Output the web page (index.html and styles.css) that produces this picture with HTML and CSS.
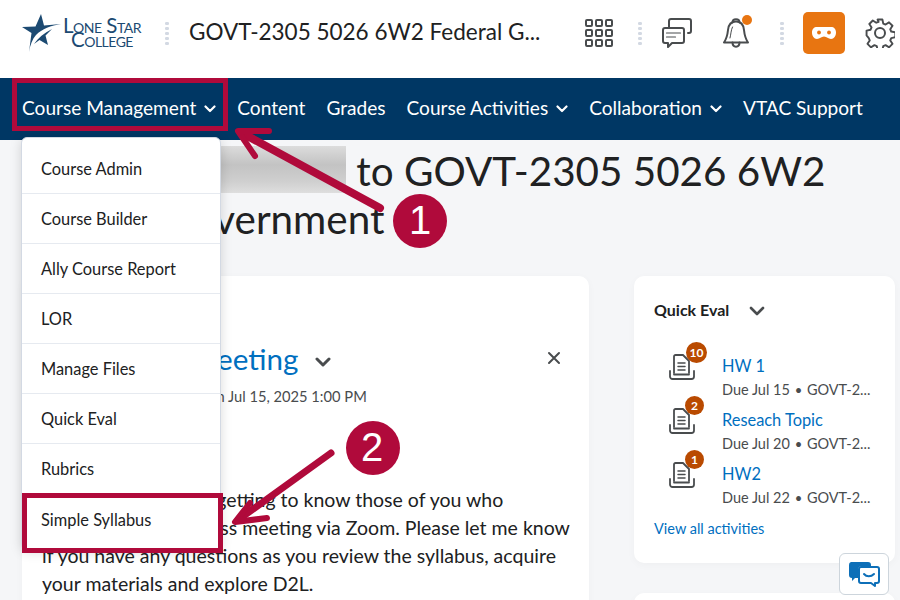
FILE: index.html
```html
<!DOCTYPE html>
<html lang="en">
<head>
<meta charset="utf-8">
<title>GOVT-2305</title>
<link rel="stylesheet" href="styles.css">
</head>
<body>
<div class="page">
  <header class="topbar">
    <div class="logo">
      <svg class="logo-star" width="41" height="40" viewBox="0 0 41 40">
        <path fill="#1c4a72" d="M19 1l3 11.500 17-1.500c-10 1.500-19 5-25 11-3.500 4-6 10-7 17l2.500-19L0 14l13.500-.5z"/>
        <path fill="#1c4a72" d="M12 31c4-6 10-11 18-15l-6.500 6.500L26 32l-8.500-5z"/>
      </svg>
      <div class="logo-text"><span>Lone Star</span><span class="logo-l2">College</span></div>
    </div>
    <span class="dots"></span>
    <div class="course-name">GOVT-2305 5026 6W2 Federal G...</div>
    <div class="tools">
      <svg class="ic-grid" width="28" height="28" viewBox="0 0 28 28" fill="none" stroke="#494c4e" stroke-width="2"><rect x="1" y="1" width="6" height="6" rx="1"/><rect x="11" y="1" width="6" height="6" rx="1"/><rect x="21" y="1" width="6" height="6" rx="1"/><rect x="1" y="11" width="6" height="6" rx="1"/><rect x="11" y="11" width="6" height="6" rx="1"/><rect x="21" y="11" width="6" height="6" rx="1"/><rect x="1" y="21" width="6" height="6" rx="1"/><rect x="11" y="21" width="6" height="6" rx="1"/><rect x="21" y="21" width="6" height="6" rx="1"/></svg>
      <span class="dots dots-a"></span>
      <svg class="ic-chat" width="30" height="30" viewBox="0 0 30 30" fill="none" stroke="#494c4e" stroke-width="2" stroke-linejoin="round" stroke-linecap="round"><path d="M7 9V3a2 2 0 0 1 2-2h18a2 2 0 0 1 2 2v10a2 2 0 0 1-2 2h-1"/><path d="M3 10h17a2 2 0 0 1 2 2v11a2 2 0 0 1-2 2H10l-4 4v-4H3a2 2 0 0 1-2-2V12a2 2 0 0 1 2-2z"/><path d="M4.500 15h14M4.500 19h9" stroke-width="1.200"/></svg>
      <span class="bell">
        <svg width="26" height="30" viewBox="0 0 26 30" fill="none" stroke="#494c4e" stroke-width="2" stroke-linejoin="round" stroke-linecap="round"><path d="M9.500 4.500C9.500 0 16.500 0 16.500 4.500"/><path d="M13 3.500C8 3.500 5.500 7 5 12c-.5 5-1 8-4 12.500h24c-3-4.500-3.500-7.500-4-12.500-.5-5-3-8.500-8-8.500z"/><path d="M9.500 24.500c0 5.500 7 5.500 7 0"/><path d="M9.500 9c-1.500 3-1.500 7-2.500 11" stroke-width="1"/></svg>
        <i class="bell-dot"></i>
      </span>
      <span class="dots dots-b"></span>
      <span class="mask-btn"><svg width="26" height="14" viewBox="0 0 26 14"><path fill="#fff" d="M6 1h14c3 0 5 2 5 5.500S23 13 20 13c-3 0-4-2.500-7-2.500S9 13 6 13c-3 0-5-3-5-6.500S3 1 6 1z"/><circle cx="8" cy="6.500" r="1.900" fill="#e87511"/><circle cx="18" cy="6.500" r="1.900" fill="#e87511"/></svg></span>
      <svg class="ic-gear" width="30" height="30" viewBox="0 0 30 30" fill="none" stroke="#494c4e" stroke-width="2" stroke-linejoin="round"><path d="M12.500 1h5l.9 4.200 2.400 1 3.600-2.300 3.600 3.600-2.300 3.600 1 2.400 4.300.9v5l-4.300.9-1 2.400 2.300 3.600-3.600 3.600-3.600-2.300-2.400 1-.9 4.300h-5l-.9-4.300-2.400-1-3.600 2.300-3.600-3.600 2.300-3.600-1-2.400L1 17.500v-5l4.200-.9 1-2.400-2.300-3.600 3.600-3.600 3.600 2.300 2.400-1z" transform="translate(.6 .6) scale(.96)"/><circle cx="15" cy="15" r="5"/></svg>
    </div>
  </header>
  <nav class="navbar">
    <span class="nav-item">Course Management <svg class="chev" width="12" height="8" viewBox="0 0 12 8"><path d="M1.500 1.500L6 6l4.500-4.500" fill="none" stroke="#fff" stroke-width="2.200" stroke-linecap="round" stroke-linejoin="round"/></svg></span>
    <span class="nav-item">Content</span>
    <span class="nav-item">Grades</span>
    <span class="nav-item">Course Activities <svg class="chev" width="12" height="8" viewBox="0 0 12 8"><path d="M1.500 1.500L6 6l4.500-4.500" fill="none" stroke="#fff" stroke-width="2.200" stroke-linecap="round" stroke-linejoin="round"/></svg></span>
    <span class="nav-item">Collaboration <svg class="chev" width="12" height="8" viewBox="0 0 12 8"><path d="M1.500 1.500L6 6l4.500-4.500" fill="none" stroke="#fff" stroke-width="2.200" stroke-linecap="round" stroke-linejoin="round"/></svg></span>
    <span class="nav-item">VTAC Support</span>
  </nav>
  <main class="content">
    <h1 class="title"><span class="blur-name"></span> to GOVT-2305 5026 6W2 Federal Government</h1>
    <div class="columns">
      <section class="card news">
        <div class="news-head">
          <span class="news-title">First Zoom Meeting</span>
          <svg class="news-chev" width="16" height="10" viewBox="0 0 16 10"><path d="M2 2l6 6 6-6" fill="none" stroke="#494c4e" stroke-width="3" stroke-linecap="round" stroke-linejoin="round"/></svg>
          <svg class="news-x" width="14" height="14" viewBox="0 0 14 14"><path d="M2 2l10 10M12 2L2 12" stroke="#494c4e" stroke-width="2" stroke-linecap="round"/></svg>
        </div>
        <p class="news-date">Posted by Your Instructor on Jul 15, 2025 1:00 PM</p>
        <p class="news-body">I do look forward to getting to know those of you who<br>attend my weekly class meeting via Zoom. Please let me know<br>if you have any questions as you review the syllabus, acquire<br>your materials and explore D2L.</p>
      </section>
      <div class="side">
        <section class="card quick">
          <div class="quick-head"><span>Quick Eval</span><svg width="16" height="10" viewBox="0 0 16 10"><path d="M2 2l6 6 6-6" fill="none" stroke="#494c4e" stroke-width="2.600" stroke-linecap="round" stroke-linejoin="round"/></svg></div>
          <ul class="evals">
            <li class="eval">
              <span class="eval-icon">
                <svg width="26" height="26" viewBox="0 0 26 26" fill="none" stroke="#494c4e" stroke-linecap="round" stroke-linejoin="round"><path stroke-width="1.800" d="M5 19V2.500A1.500 1.500 0 0 1 6.500 1H14l6 6v12"/><path stroke-width="1.500" d="M9 9h7M9 12.500h7M9 16h7"/><path stroke-width="1.800" d="M1 17v5.500a2.500 2.500 0 0 0 2.500 2.500h19a2.500 2.500 0 0 0 2.500-2.500V17M5 20.500h15"/></svg>
                <b class="badge badge-w">10</b>
              </span>
              <div class="eval-text"><a class="eval-link">HW 1</a><div class="eval-meta">Due Jul 15 <i>•</i> GOVT-2...</div></div>
            </li>
            <li class="eval">
              <span class="eval-icon">
                <svg width="26" height="26" viewBox="0 0 26 26" fill="none" stroke="#494c4e" stroke-linecap="round" stroke-linejoin="round"><path stroke-width="1.800" d="M5 19V2.500A1.500 1.500 0 0 1 6.500 1H14l6 6v12"/><path stroke-width="1.500" d="M9 9h7M9 12.500h7M9 16h7"/><path stroke-width="1.800" d="M1 17v5.500a2.500 2.500 0 0 0 2.500 2.500h19a2.500 2.500 0 0 0 2.500-2.500V17M5 20.500h15"/></svg>
                <b class="badge">2</b>
              </span>
              <div class="eval-text"><a class="eval-link">Reseach Topic</a><div class="eval-meta">Due Jul 20 <i>•</i> GOVT-2...</div></div>
            </li>
            <li class="eval">
              <span class="eval-icon">
                <svg width="26" height="26" viewBox="0 0 26 26" fill="none" stroke="#494c4e" stroke-linecap="round" stroke-linejoin="round"><path stroke-width="1.800" d="M5 19V2.500A1.500 1.500 0 0 1 6.500 1H14l6 6v12"/><path stroke-width="1.500" d="M9 9h7M9 12.500h7M9 16h7"/><path stroke-width="1.800" d="M1 17v5.500a2.500 2.500 0 0 0 2.500 2.500h19a2.500 2.500 0 0 0 2.500-2.500V17M5 20.500h15"/></svg>
                <b class="badge">1</b>
              </span>
              <div class="eval-text"><a class="eval-link">HW2</a><div class="eval-meta">Due Jul 22 <i>•</i> GOVT-2...</div></div>
            </li>
          </ul>
          <a class="view-all">View all activities</a>
        </section>
        <section class="card next"></section>
      </div>
    </div>
  </main>
  <ul class="menu">
    <li>Course Admin</li>
    <li>Course Builder</li>
    <li>Ally Course Report</li>
    <li>LOR</li>
    <li>Manage Files</li>
    <li>Quick Eval</li>
    <li>Rubrics</li>
    <li>Simple Syllabus</li>
  </ul>
  <span class="hl hl-nav"></span>
  <span class="hl hl-menu"></span>
  <svg class="arrows" width="900" height="600" viewBox="0 0 900 600" fill="none" stroke="#b00a3b" stroke-linecap="round" stroke-linejoin="round">
    <path stroke-width="8" d="M380 208L242 133"/>
    <path stroke-width="6" d="M255 156L238 131 269 131"/>
    <path stroke-width="7" d="M331 453L238 520"/>
    <path stroke-width="6" d="M250 503L235 522 267 518"/>
    <circle cx="420" cy="221" r="27" fill="#b00a3b" stroke="none"/>
    <circle cx="373" cy="448" r="27" fill="#b00a3b" stroke="none"/>
  </svg>
  <span class="num num-1">1</span>
  <span class="num num-2">2</span>
  <span class="chat-btn">
    <svg width="32" height="26" viewBox="0 0 32 26"><path fill="#0d6fb8" d="M3 1h17a3 3 0 0 1 3 3v1h-9a4 4 0 0 0-4 4v8H7l-3 3v-3a3 3 0 0 1-3-3V4a3 3 0 0 1 2-3z"/><path fill="#fff" stroke="#0d6fb8" stroke-width="2" stroke-linejoin="round" d="M13 6h16a2 2 0 0 1 2 2v12a2 2 0 0 1-2 2h-2v3l-4-3H13a2 2 0 0 1-2-2V8a2 2 0 0 1 2-2z"/><path d="M16 13c2.500 3 7 3 10 0" fill="none" stroke="#0d6fb8" stroke-width="2" stroke-linecap="round"/></svg>
  </span>
</div>
</body>
</html>
```
FILE: styles.css
```css
* { box-sizing: border-box; }
html, body { margin: 0; padding: 0; }
body { font-family: Lato, "Noto Sans", sans-serif; color: #202122; background: #f5f6f8; }
.page { position: relative; width: 900px; height: 600px; overflow: hidden; background: #f5f6f8; }

.topbar { height: 78px; background: #fff; display: flex; align-items: center; padding: 0 0 12px 22px; }
.logo { display: flex; align-items: center; width: 124px; }
.logo-star { flex: none; display: block; }
.logo-text { font-family: Lato, sans-serif; font-variant: small-caps; color: #1c4a72; font-size: 20.500px; line-height: 14px; letter-spacing: -.5px; display: flex; flex-direction: column; white-space: nowrap; margin-top: -2px; }
.logo-l2 { padding-left: 8px; }
.dots { width: 4px; height: 24px; flex: none; background: radial-gradient(circle, #d3d9e3 1.700px, transparent 2px) 0 0 / 4px 5px repeat-y; }
.topbar > .dots { margin-left: 19px; }
.course-name { font-size: 22.500px; margin: -4px 0 0 20px; width: 396px; white-space: nowrap; color: #202122; }
.tools { display: flex; align-items: center; flex: none; }
.ic-grid { display: block; }
.dots-a { margin-left: 25px; }
.ic-chat { margin-left: 20px; display: block; }
.bell { position: relative; display: block; margin-left: 31px; height: 30px; }
.bell svg { display: block; }
.bell-dot { position: absolute; top: -3px; right: -3px; width: 10px; height: 10px; border-radius: 50%; background: #e87511; }
.dots-b { margin-left: 31px; }
.mask-btn { width: 42px; height: 42px; margin-left: 19px; border-radius: 5px; background: #e87511; display: flex; align-items: center; justify-content: center; }
.ic-gear { margin-left: 20px; display: block; }

.navbar { height: 62px; background: #003764; display: flex; align-items: center; padding: 0 0 4px 22px; gap: 21px; }
.nav-item { color: #fff; font-size: 19.100px; white-space: nowrap; display: flex; align-items: center; gap: 8px; }
.chev { margin-top: 4px; }

.content { padding: 7px 5px 0 22px; }
.title { margin: 0; font-size: 40.400px; font-weight: 400; line-height: 48px; height: 129px; color: #202122; }
.blur-name { display: inline-block; width: 324px; height: 47px; margin-top: -1px; vertical-align: top; background: linear-gradient(180deg, #dcdcdc, #c3c3c3 40%, #cfcfcf 75%, #dedede); }
.columns { display: flex; gap: 45px; align-items: flex-start; }
.card { background: #fff; border-radius: 10px; box-shadow: 0 2px 8px rgba(0, 0, 0, .03); }
.news { width: 567px; height: 400px; padding: 65px 28px 0 20px; }
.news-head { display: flex; align-items: center; }
.news-title { font-size: 29.600px; line-height: 36px; color: #006fbf; white-space: nowrap; }
.news-chev { margin: 6px 0 0 17px; }
.news-x { margin: -2px 0 0 auto; }
.news-date { margin: 9px 0 0; font-size: 14.700px; line-height: 20px; color: #494c4e; white-space: nowrap; }
.news-body { margin: 80px -8px 0 0; font-size: 19.500px; line-height: 28px; color: #202122; white-space: nowrap; }
.side { width: 261px; display: flex; flex-direction: column; gap: 30px; }
.quick { height: 287px; padding: 24px 20px 0; }
.quick-head { display: flex; align-items: center; gap: 20px; font-size: 16px; font-weight: 700; line-height: 20px; color: #202122; }
.quick-head svg { margin-top: 2px; }
.evals { list-style: none; margin: 18px 0 0; padding: 0 0 0 15px; }
.eval { display: flex; height: 54px; align-items: flex-start; }
.eval-icon { position: relative; width: 53px; flex: none; padding-top: 16px; }
.eval-icon svg { display: block; }
.eval-text { height: 54px; padding-top: 17px; }
.eval-link { display: block; font-size: 16.400px; line-height: 22px; color: #006fbf; }
.eval-meta { font-size: 14.500px; line-height: 20px; margin-top: 3px; color: #494c4e; white-space: nowrap; }
.eval-meta i { font-style: normal; font-size: 13px; margin: 0 1px; }
.badge { position: absolute; left: 16px; top: 4px; width: 19px; height: 19px; border-radius: 50%; background: #b94a00; color: #fff; font-size: 12px; font-weight: 700; line-height: 19px; text-align: center; }
.badge-w { left: 17px; width: 21px; height: 21px; line-height: 21px; top: 4px; }
.view-all { display: block; margin-top: 19px; font-size: 14.500px; line-height: 20px; color: #006fbf; }
.next { height: 100px; }

.menu { position: absolute; left: 21px; top: 137px; width: 200px; margin: 0; padding: 6px 0 5px; list-style: none; background: #fff; border: 1px solid #d3d9e3; border-radius: 6px; box-shadow: 0 2px 12px rgba(0, 0, 0, .15); }
.menu li { height: 50px; padding: 0 19px; display: flex; align-items: center; font-size: 16.400px; color: #202122; border-bottom: 1px solid #e6eaf0; }
.menu li:last-child { border-bottom: 0; }

.hl { position: absolute; border: 5px solid #b00a3b; }
.hl-nav { left: 12px; top: 78px; width: 216px; height: 53px; }
.hl-menu { left: 22px; top: 493px; width: 201px; height: 60px; }
.arrows { position: absolute; left: 0; top: 0; pointer-events: none; }
.num { position: absolute; width: 54px; text-align: center; color: #fff; font-family: "Liberation Sans", sans-serif; font-size: 40px; line-height: 54px; }
.num-1 { left: 393px; top: 193px; }
.num-2 { left: 345px; top: 420px; }
.chat-btn { position: absolute; left: 839px; top: 553px; width: 50px; height: 42px; background: #fff; border: 1px solid #cdd5dc; border-radius: 6px; display: flex; align-items: center; justify-content: center; }
```
